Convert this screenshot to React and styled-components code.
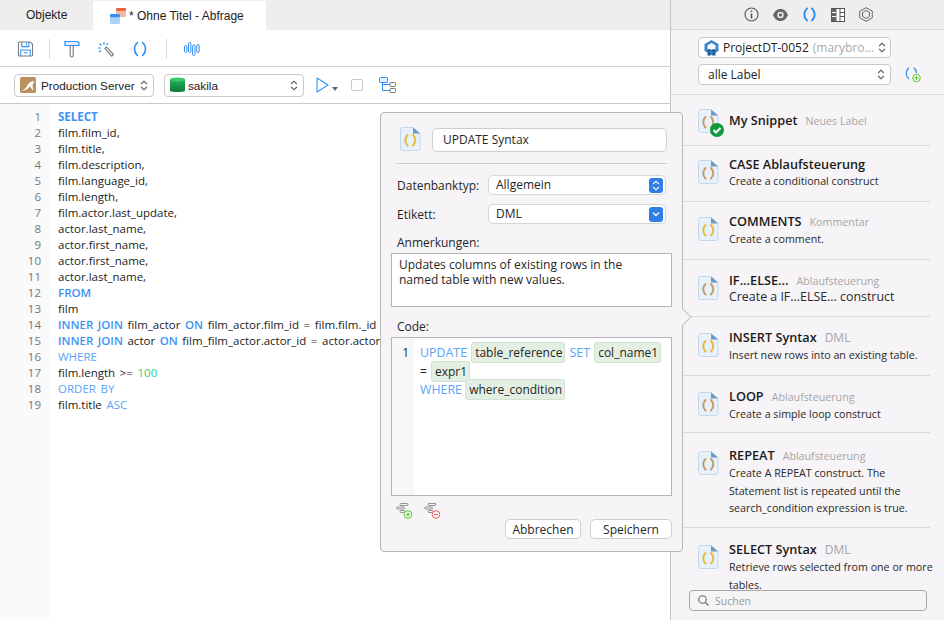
import React from 'react'
import styled, { createGlobalStyle } from 'styled-components'

const Global = createGlobalStyle`
  html, body { margin: 0; padding: 0; background: #fff; }
  body { font-family: 'Open Sans', 'Noto Sans', sans-serif; color: #1c1c1c; }
  * { box-sizing: border-box; }
`

const Page = styled.div`
  position: relative;
  width: 944px;
  height: 620px;
  display: flex;
  overflow: hidden;
`

const Main = styled.div`
  width: 670px;
  display: flex;
  flex-direction: column;
`

const TabBar = styled.div`
  height: 30px;
  background: #efeeee;
  display: flex;
  font: 12px 'Liberation Sans', Arial, sans-serif;
`

const Tab = styled.div`
  height: ${(p) => (p.$active ? '29px' : '30px')};
  margin-top: ${(p) => (p.$active ? '1px' : '0')};
  width: ${(p) => p.$w}px;
  background: ${(p) => (p.$active ? '#fff' : 'transparent')};
  padding-left: ${(p) => p.$pad}px;
  padding-top: ${(p) => (p.$active ? '1px' : '0')};
  display: flex;
  align-items: center;
  gap: 2px;
  color: #222;
`

const Toolbar = styled.div`
  height: 37px;
  border-bottom: 1px solid #d2d2d2;
  display: flex;
  align-items: center;
  padding-left: 17px;
  padding-top: 2px;
`

const ToolIcon = styled.div`
  width: ${(p) => p.$w}px;
  margin-left: ${(p) => p.$ml || 0}px;
  display: flex;
  justify-content: center;
`

const ToolSep = styled.div`
  width: 1px;
  height: 20px;
  background: #d8d8d8;
  margin: 0 ${(p) => p.$r}px 0 ${(p) => p.$l}px;
`

const ConnBar = styled.div`
  height: 37px;
  border-bottom: 1px solid #c8c8c8;
  display: flex;
  align-items: center;
  padding-left: 14px;
`

const ConnSelect = styled.div`
  width: 140px;
  height: 23px;
  margin-right: ${(p) => p.$mr}px;
  background: #fff;
  border: 1px solid #c9c9c9;
  border-radius: 4px;
  display: flex;
  align-items: center;
  gap: ${(p) => p.$gap}px;
  padding: 0 5px;
  font: 11.7px 'Liberation Sans', Arial, sans-serif;
  color: #222;
  white-space: nowrap;
  svg:last-child { margin-left: auto; flex: none; }
`

const Editor = styled.div`
  flex: 1;
  display: flex;
  overflow: hidden;
  font-size: 11.5px;
  line-height: 16px;
`

const Gutter = styled.div`
  width: 49px;
  background: #fafafa;
  padding: 5px 8px 0 0;
  text-align: right;
  color: #777;
`

const CodeArea = styled.div`
  flex: 1;
  padding: 5px 0 0 9px;
  white-space: nowrap;
  word-spacing: 1.6px;
`

const Kw = styled.span`
  color: ${(p) => (p.$light ? '#59a4f8' : '#3d92f5')};
  font-weight: ${(p) => p.$weight || 400};
  font-size: ${(p) => (p.$size ? `${p.$size}px` : 'inherit')};
`

const Num = styled.span`
  color: #2fcf7f;
`

const Side = styled.div`
  width: 274px;
  background: #f6f4f6;
  border-left: 1px solid #c4c4c4;
  display: flex;
  flex-direction: column;
  position: relative;
`

const SideTabs = styled.div`
  height: 30px;
  background: #efeeee;
  border-bottom: 1px solid #d8d8d8;
  display: flex;
  align-items: center;
  padding-left: 73px;
  gap: 14px;
`

const Filters = styled.div`
  height: 65px;
  border-bottom: 1px solid #d8d8d8;
  padding: 7px 0 0 27px;
  display: flex;
  flex-direction: column;
  gap: 6px;
`

const FilterRow = styled.div`
  display: flex;
  align-items: center;
  gap: 14px;
`

const FilterSelect = styled.div`
  width: 193px;
  height: 21px;
  background: #fff;
  border: 1px solid #c9c9c9;
  border-radius: 4px;
  display: flex;
  align-items: center;
  padding: 0 5px 0 ${(p) => p.$pad}px;
  gap: 4px;
  font-size: 12px;
  color: #222;
  white-space: nowrap;
  line-height: 19px;
  svg:last-child { margin-left: auto; flex: none; }
`

const Owner = styled.span`
  color: #aaa;
  font-size: 12px;
`

const List = styled.div`
  flex: 1;
  overflow: hidden;
  padding-left: 12px;
`

const Item = styled.div`
  height: ${(p) => p.$h}px;
  width: 247px;
  border-bottom: ${(p) => (p.$last ? 'none' : '1px solid #d9d9d9')};
  display: flex;
  padding: ${(p) => p.$top}px 0 0 15px;
  gap: 9px;
`

const ItemIcon = styled.div`
  margin-top: ${(p) => p.$offset}px;
  flex: none;
  height: 24px;
`

const ItemBody = styled.div`
  flex: 1;
  min-width: 0;
  margin-top: -1px;
  white-space: nowrap;
`

const TitleRow = styled.div`
  display: flex;
  align-items: baseline;
  gap: 8px;
  line-height: 18px;
`

const Title = styled.span`
  font-size: 12.7px;
  font-weight: 600;
  color: #1a1a1a;
`

const Tag = styled.span`
  font-size: ${(p) => p.$size || 10.7}px;
  color: #a6a6a6;
`

const Desc = styled.div`
  font-size: ${(p) => p.$size || 10.7}px;
  line-height: ${(p) => p.$lh || 17.5}px;
  color: #2a2a2a;
  white-space: normal;
  width: 206px;
`

const SearchBox = styled.div`
  position: absolute;
  left: 18px;
  bottom: 9px;
  width: 238px;
  height: 21px;
  background: #f6f4f6;
  border: 1px solid #a9a9a9;
  border-radius: 4px;
  display: flex;
  align-items: center;
  gap: 6px;
  padding-left: 8px;
  font-size: 10.5px;
  color: #999;
`

const SearchCover = styled.div`
  position: absolute;
  left: 0;
  right: 0;
  bottom: 0;
  height: 31px;
  background: linear-gradient(#f6f4f600, #f6f4f6 8px);
`

const Popover = styled.div`
  position: absolute;
  left: 380px;
  top: 112px;
  width: 303px;
  height: 440px;
  background: #f6f4f6;
  border: 1px solid #b8b8b8;
  border-radius: 4px;
  padding: 13px 10px 0 10px;
  display: flex;
  flex-direction: column;
  font-size: 12px;
  color: #262626;
`

const Arrow = styled.div`
  position: absolute;
  right: -8px;
  top: 197px;
  width: 14px;
  height: 14px;
  background: #f6f4f6;
  border-top: 1px solid #b8b8b8;
  border-right: 1px solid #b8b8b8;
  transform: rotate(45deg) scale(0.85);
`

const NameRow = styled.div`
  display: flex;
  align-items: center;
  gap: 10px;
  padding: 0 5px 10px 9px;
  height: 37px;
`

const NameInput = styled.div`
  flex: 1;
  height: 24px;
  background: #fff;
  border: 1px solid #cfcfcf;
  border-radius: 5px;
  display: flex;
  align-items: center;
  padding-left: 10px;
  font-size: 12px;
`

const Divider = styled.div`
  height: 1px;
  background: #d0d0d0;
  margin: 0 5px 11px 5px;
`

const FormRow = styled.div`
  display: flex;
  align-items: center;
  height: 20px;
  margin: 0 6px 9px 6px;
`

const FormLabel = styled.div`
  width: 91px;
`

const BlueSelect = styled.div`
  flex: 1;
  height: 20px;
  background: #fff;
  border: 1px solid #d6d6d6;
  border-radius: 5px;
  display: flex;
  align-items: center;
  justify-content: space-between;
  padding: 0 2px 2px 7px;
`

const BlueKnob = styled.div`
  width: 14px;
  height: 15px;
  margin-bottom: -2px;
  background: #2f7fe6;
  border-radius: 3px;
  display: flex;
  align-items: center;
  justify-content: center;
`

const SectionLabel = styled.div`
  line-height: 16px;
  margin: ${(p) => p.$mt || 0}px 0 2px 6px;
`

const Notes = styled.div`
  height: 54px;
  background: #fff;
  border: 1px solid #b5b5b5;
  padding: 3px 40px 0 7px;
  line-height: 15px;
  font-size: 12px;
`

const CodeBox = styled.div`
  height: 159px;
  background: #fff;
  border: 1px solid #b5b5b5;
  display: flex;
  font-size: 12px;
`

const CodeGutter = styled.div`
  width: 22px;
  background: #f7f7f7;
  padding: 6px 5px 0 0;
  text-align: right;
  line-height: 18px;
`

const SnippetCode = styled.div`
  flex: 1;
  padding: 6px 0 0 6px;
  line-height: 18.5px;
`

const Chip = styled.span`
  background: #e2efe2;
  border: 1px solid #d2e3d2;
  border-radius: 3px;
  padding: 1px 2px 1px 3px;
  margin: 0 ${(p) => (p.$tight ? 0 : 1)}px;
`

const PopFoot = styled.div`
  display: flex;
  gap: 11px;
  padding: 7px 0 0 5px;
`

const Buttons = styled.div`
  display: flex;
  justify-content: flex-end;
  gap: 9px;
`

const Btn = styled.div`
  width: ${(p) => p.$w}px;
  height: 20px;
  background: #fff;
  border: 1px solid #cfcfcf;
  border-radius: 5px;
  display: flex;
  align-items: center;
  justify-content: center;
  font-size: 12px;
`

const Caret = styled.div`
  width: 0;
  height: 0;
  border-left: 3px solid transparent;
  border-right: 3px solid transparent;
  border-top: 4px solid #666;
  margin: 8px 13px 0 3px;
`

const PlayWrap = styled.div`
  display: flex;
  align-items: center;
  margin-left: 12px;
`

const CheckBox = styled.div`
  width: 12px;
  height: 12px;
  border: 1px solid #c8c8c8;
  border-radius: 2px;
  margin-right: 16px;
`

const Chevrons = ({ color = '#555', size = 11 }) => (
  <svg width="8" height={size} viewBox="0 0 8 11" fill="none" stroke={color} strokeWidth="1.1">
    <path d="M1.2 4 4 1.2 6.8 4M1.2 7 4 9.8 6.8 7" />
  </svg>
)

const Parens = ({ color = '#2f8ff5', size = 16, width = 1.6 }) => (
  <svg width={size} height={size} viewBox="0 0 16 16" fill="none" stroke={color} strokeWidth={width} strokeLinecap="round">
    <path d="M5.5 1.5C1.5 5 1.5 11 5.5 14.5M10.5 1.5C14.5 5 14.5 11 10.5 14.5" />
  </svg>
)

const FileIcon = ({ color, check }) => (
  <svg width="22" height="26" viewBox="0 0 22 26" style={{ flex: 'none', overflow: 'visible' }}>
    <path d="M2.5.5H13L20 6.5V21.5a2 2 0 0 1-2 2H2.5a2 2 0 0 1-2-2V2.5a2 2 0 0 1 2-2z" fill="#e6f1fb" stroke="#c4d8ea" />
    <path d="M13 .5 20 6.5H13z" fill="#6a9ac4" />
    <path d="M7.5 8C4.5 11 4.5 15.5 7.5 18.5M13 8C16 11 16 15.5 13 18.5" fill="none" stroke={color} strokeWidth="2" strokeLinecap="round" />
    {check && <circle cx="19" cy="21" r="7" fill="#0f9a3c" />}
    {check && <path d="M15.5 21l2.5 2.5 4.5-4.5" fill="none" stroke="#fff" strokeWidth="2" />}
  </svg>
)

const SaveIcon = () => (
  <svg width="18" height="18" viewBox="0 0 18 18" fill="none" strokeWidth="1.1">
    <path d="M2.5 1.5H14L16.5 4V15a1.5 1.5 0 0 1-1.5 1.5H3A1.5 1.5 0 0 1 1.5 15V2.5z" stroke="#777" />
    <path d="M5 1.5V6.5H12.5V1.5M10 3V5" stroke="#2f8ff5" />
    <path d="M4 16.5V10H14V16.5M7 13H11" stroke="#2f8ff5" />
  </svg>
)

const HammerIcon = () => (
  <svg width="16" height="18" viewBox="0 0 16 18" fill="none">
    <path d="M1 1.5H13.5L15 3V5.5H1z" stroke="#2f8ff5" strokeWidth="1.2" fill="#e3f0fd" />
    <path d="M6.2 5.5V15.5a1.5 1.5 0 0 0 3 0V5.5" stroke="#777" strokeWidth="1.1" />
  </svg>
)

const WandIcon = () => (
  <svg width="17" height="17" viewBox="0 0 17 17" fill="none" strokeWidth="1.1">
    <path d="M8 7.5 9.5 6l7 7.5-1.7 1.7z" stroke="#777" />
    <path d="M7 1v3M1 7h3M2.5 2.5 4.5 4.5M11 2 9.5 4M2 11l2-1.5" stroke="#2f8ff5" />
  </svg>
)

const BarsIcon = () => (
  <svg width="16" height="14" viewBox="0 0 16 14" fill="none" stroke="#2f8ff5" strokeWidth="1">
    <rect x=".5" y="3.5" width="2.4" height="7" rx="1.2" />
    <rect x="4.5" y=".5" width="2.4" height="10" rx="1.2" />
    <rect x="8.6" y="3" width="2.4" height="10.5" rx="1.2" />
    <rect x="12.8" y="2.5" width="2.4" height="8" rx="1.2" />
  </svg>
)

const TableTabIcon = () => (
  <svg width="17" height="16" viewBox="0 0 17 16">
    <rect x="6" y="0" width="10" height="9" rx="1.5" fill="#f4b8a8" />
    <rect x="6" y="0" width="10" height="3" rx="1.2" fill="#e8623c" />
    <rect x="0" y="6" width="10" height="10" rx="1.5" fill="#a8d3f7" />
    <rect x="0" y="6" width="10" height="3.2" rx="1.2" fill="#2f8ff5" />
  </svg>
)

const SealIcon = () => (
  <svg width="16" height="16" viewBox="0 0 16 16" style={{ flex: 'none' }}>
    <rect width="16" height="16" rx="1.5" fill="#b9925f" />
    <path d="M1 13.5c3-.3 4.5-2 6-4.5 1.2-2 2.7-4.5 6-4.8l2 1-2 .8c-.6 2.5-.5 5 .8 7.5-2-1.4-3.4-3-4-4.5C9 11.500 6 13.500 1 13.500z" fill="#fff" />
  </svg>
)

const DbIcon = () => (
  <svg width="15" height="16" viewBox="0 0 15 16" style={{ flex: 'none' }}>
    <defs>
      <linearGradient id="dbg" x1="0" x2="0" y1="0" y2="1">
        <stop offset="0" stopColor="#2db35a" />
        <stop offset="1" stopColor="#0b7a38" />
      </linearGradient>
    </defs>
    <path d="M0 2.500C0 .8 15 .8 15 2.500V13.500C15 15.500 0 15.500 0 13.500z" fill="url(#dbg)" />
    <ellipse cx="7.500" cy="2.500" rx="7.500" ry="2" fill="#36c96a" />
  </svg>
)

const PlayIcon = () => (
  <svg width="13" height="16" viewBox="0 0 13 16" fill="none" stroke="#2f8ff5" strokeWidth="1.1">
    <path d="M1 1v14l11-7z" strokeLinejoin="round" />
  </svg>
)

const TreeIcon = () => (
  <svg width="17" height="16" viewBox="0 0 17 16" fill="none" strokeWidth="1">
    <rect x=".5" y=".5" width="8" height="5" rx=".8" stroke="#2f8ff5" fill="#e3f0fd" />
    <rect x="11" y="5.500" width="5.500" height="4" rx=".8" stroke="#777" />
    <rect x="11" y="11.500" width="5.500" height="4" rx=".8" stroke="#777" />
    <path d="M3.500 5.500V13.500H11M3.500 7.500H11" stroke="#2f8ff5" />
  </svg>
)

const InfoIcon = () => (
  <svg width="15" height="15" viewBox="0 0 15 15" fill="none" stroke="#555" strokeWidth="1.1">
    <circle cx="7.500" cy="7.500" r="6.500" />
    <path d="M7.500 6.500V11.500" strokeWidth="1.500" />
    <path d="M7.500 3.500v1.500" strokeWidth="1.500" />
  </svg>
)

const EyeIcon = () => (
  <svg width="15" height="12" viewBox="0 0 15 12">
    <path d="M0 6C2 1.500 4.500 0 7.500 0S13 1.500 15 6c-2 4.500-4.500 6-7.500 6S2 10.500 0 6z" fill="#666" />
    <circle cx="7.500" cy="6" r="3.200" fill="#efeeee" />
    <circle cx="7.500" cy="6" r="1.700" fill="#666" />
  </svg>
)

const ColumnsIcon = () => (
  <svg width="14" height="14" viewBox="0 0 14 14" fill="none">
    <rect x=".5" y=".5" width="13" height="13" fill="#fff" stroke="#555" />
    <path d="M.5 1h5v12h-5z" fill="#666" />
    <path d="M1 4.500h4M1 8.500h4" stroke="#fff" />
    <path d="M9 1v12M9 4.500h4.500M9 8.500h4.500" stroke="#555" />
  </svg>
)

const HexIcon = () => (
  <svg width="14" height="15" viewBox="0 0 14 15" fill="none" stroke="#666" strokeWidth="1">
    <path d="M7 .7 13.300 4.200v6.600L7 14.300.7 10.800V4.200z" />
    <path d="M7 3.500 10.500 5.500v4L7 11.500 3.500 9.500v-4z" />
  </svg>
)

const ProjectIcon = () => (
  <svg width="15" height="16" viewBox="0 0 15 16" style={{ flex: 'none' }}>
    <path d="M7.500 0 14.500 4V11L7.500 15 .5 11V4z" fill="#3a87c8" />
    <path d="M7.500 3 11.500 5.300V9.500H3.500V5.300z" fill="#f6f9fc" />
    <circle cx="5.200" cy="10.500" r="1.500" fill="#1c5f97" />
    <circle cx="9.800" cy="10.500" r="1.500" fill="#1c5f97" />
    <path d="M3.500 15.500V13c0-1 3.400-1 3.400 0v2.500zM8.100 15.500V13c0-1 3.400-1 3.400 0v2.500z" fill="#1c5f97" />
  </svg>
)

const AddSnippetIcon = () => (
  <svg width="16" height="16" viewBox="0 0 16 16" fill="none" style={{ overflow: 'visible' }}>
    <path d="M3.500 1C.5 4 .5 8.500 3.500 11.500M9 1C10.500 2.300 11.300 4 11.500 5.500" stroke="#2f8ff5" strokeWidth="1.300" strokeLinecap="round" />
    <circle cx="11.500" cy="11" r="3.800" fill="#f6f4f6" stroke="#5fc92e" strokeWidth="1" />
    <path d="M9.500 11h4M11.500 9v4" stroke="#5fc92e" strokeWidth="1" />
  </svg>
)

const GroupIcon = ({ color, minus }) => (
  <svg width="17" height="16" viewBox="0 0 17 16" fill="none">
    <rect x="4" y=".5" width="8" height="2" rx="1" stroke="#777" strokeWidth=".8" />
    <rect x=".5" y="4" width="8" height="2" rx="1" stroke="#777" strokeWidth=".8" />
    <rect x="4" y="7.500" width="5" height="2" rx="1" stroke="#777" strokeWidth=".8" />
    <circle cx="12" cy="11.500" r="3.800" fill="#f6f4f6" stroke={color} strokeWidth="1" />
    <path d="M10 11.500h4" stroke={color} strokeWidth="1" />
    {!minus && <path d="M12 9.500v4" stroke={color} strokeWidth="1" />}
  </svg>
)

const SearchIcon = () => (
  <svg width="11" height="11" viewBox="0 0 11 11" fill="none" stroke="#666" strokeWidth="1.100">
    <circle cx="4.500" cy="4.500" r="3.800" />
    <path d="M7.300 7.300 10.500 10.500" />
  </svg>
)

const lines = [
  <Kw $weight={700}>SELECT</Kw>,
  'film.film_id,',
  'film.title,',
  'film.description,',
  'film.language_id,',
  'film.length,',
  'film.actor.last_update,',
  'actor.last_name,',
  'actor.first_name,',
  'actor.first_name,',
  'actor.last_name,',
  <Kw $weight={600}>FROM</Kw>,
  'film',
  <><Kw $weight={600}>INNER JOIN</Kw> film_actor <Kw $weight={600}>ON</Kw> film_actor.film_id = film.film._id</>,
  <><Kw $weight={600}>INNER JOIN</Kw> actor <Kw $weight={600}>ON</Kw> film_film_actor.actor_id = actor.actor_id</>,
  <Kw $light>WHERE</Kw>,
  <>film.length &gt;= <Num>100</Num></>,
  <Kw $light>ORDER BY</Kw>,
  <>film.title <Kw $light>ASC</Kw></>,
]

const TAN = '#c99a66'
const GOLD = '#e8b93c'

const snippets = [
  { title: 'My Snippet', tag: 'Neues Label', color: TAN, check: true, h: 51, top: 17, icon: -3 },
  { title: 'CASE Ablaufsteuerung', desc: 'Create a conditional construct', color: TAN, h: 56, top: 10, icon: 4 },
  { title: 'COMMENTS', tag: 'Kommentar', desc: 'Create a comment.', color: GOLD, h: 58, top: 11, icon: 4 },
  { title: 'IF...ELSE...', tag: 'Ablaufsteuerung', desc: 'Create a IF...ELSE... construct', descSize: 12.4, descLh: 14, color: TAN, h: 57, top: 12, icon: 4 },
  { title: 'INSERT Syntax', tag: 'DML', tagSize: 12, desc: 'Insert new rows into an existing table.', color: GOLD, h: 59, top: 12, icon: 4 },
  { title: 'LOOP', tag: 'Ablaufsteuerung', desc: 'Create a simple loop construct', color: TAN, h: 57, top: 12, icon: 4 },
  { title: 'REPEAT', tag: 'Ablaufsteuerung', desc: 'Create A REPEAT construct. The Statement list is repeated until the search_condition expression is true.', color: TAN, h: 95, top: 14, icon: 4 },
  { title: 'SELECT Syntax', tag: 'DML', tagSize: 12, desc: 'Retrieve rows selected from one or more tables.', color: GOLD, h: 70, top: 13, icon: 4, last: true },
]

export default function App() {
  return (
    <Page>
      <Global />
      <Main>
        <TabBar>
          <Tab $w={93} $pad={26}>Objekte</Tab>
          <Tab $active $w={173} $pad={17}><TableTabIcon />* Ohne Titel - Abfrage</Tab>
        </TabBar>
        <Toolbar>
          <ToolIcon $w={17}><SaveIcon /></ToolIcon>
          <ToolSep $l={15} $r={14} />
          <ToolIcon $w={16}><HammerIcon /></ToolIcon>
          <ToolIcon $w={17} $ml={17}><WandIcon /></ToolIcon>
          <ToolIcon $w={16} $ml={18}><Parens /></ToolIcon>
          <ToolSep $l={18} $r={17} />
          <ToolIcon $w={16}><BarsIcon /></ToolIcon>
        </Toolbar>
        <ConnBar>
          <ConnSelect $mr={10} $gap={5}><SealIcon />Production Server<Chevrons /></ConnSelect>
          <ConnSelect $mr={0} $gap={3}><DbIcon />sakila<Chevrons /></ConnSelect>
          <PlayWrap><PlayIcon /><Caret /></PlayWrap>
          <CheckBox />
          <TreeIcon />
        </ConnBar>
        <Editor>
          <Gutter>{lines.map((_, i) => <div key={i}>{i + 1}</div>)}</Gutter>
          <CodeArea>{lines.map((l, i) => <div key={i}>{l}</div>)}</CodeArea>
        </Editor>
      </Main>
      <Side>
        <SideTabs>
          <InfoIcon />
          <EyeIcon />
          <Parens size={15} width={2} />
          <ColumnsIcon />
          <HexIcon />
        </SideTabs>
        <Filters>
          <FilterRow>
            <FilterSelect $pad={5}><ProjectIcon />ProjectDT-0052 <Owner>(marybro...</Owner><Chevrons /></FilterSelect>
          </FilterRow>
          <FilterRow>
            <FilterSelect $pad={9}>alle Label<Chevrons /></FilterSelect>
            <AddSnippetIcon />
          </FilterRow>
        </Filters>
        <List>
          {snippets.map((s) => (
            <Item key={s.title} $h={s.h} $top={s.top} $last={s.last}>
              <ItemIcon $offset={s.icon}><FileIcon color={s.color} check={s.check} /></ItemIcon>
              <ItemBody>
                <TitleRow>
                  <Title>{s.title}</Title>
                  {s.tag && <Tag $size={s.tagSize}>{s.tag}</Tag>}
                </TitleRow>
                {s.desc && <Desc $size={s.descSize} $lh={s.descLh}>{s.desc}</Desc>}
              </ItemBody>
            </Item>
          ))}
        </List>
        <SearchCover />
        <SearchBox><SearchIcon />Suchen</SearchBox>
      </Side>
      <Popover>
        <Arrow />
        <NameRow>
          <FileIcon color={GOLD} />
          <NameInput>UPDATE Syntax</NameInput>
        </NameRow>
        <Divider />
        <FormRow>
          <FormLabel>Datenbanktyp:</FormLabel>
          <BlueSelect>Allgemein<BlueKnob><Chevrons color="#fff" /></BlueKnob></BlueSelect>
        </FormRow>
        <FormRow>
          <FormLabel>Etikett:</FormLabel>
          <BlueSelect>DML
            <BlueKnob>
              <svg width="8" height="6" viewBox="0 0 8 6" fill="none" stroke="#fff" strokeWidth="1.300"><path d="M1 1.500 4 4.500 7 1.500" /></svg>
            </BlueKnob>
          </BlueSelect>
        </FormRow>
        <SectionLabel $mt={2}>Anmerkungen:</SectionLabel>
        <Notes>Updates columns of existing rows in the named table with new values.</Notes>
        <SectionLabel $mt={12}>Code:</SectionLabel>
        <CodeBox>
          <CodeGutter>1</CodeGutter>
          <SnippetCode>
            <Kw $light $weight={500} $size={12.4}>UPDATE</Kw> <Chip>table_reference</Chip> <Kw $light $weight={500} $size={12.4}>SET</Kw> <Chip>col_name1</Chip><br />
            = <Chip>expr1</Chip><br />
            <Kw $light $weight={500} $size={12.4}>WHERE</Kw> <Chip $tight>where_condition</Chip>
          </SnippetCode>
        </CodeBox>
        <PopFoot>
          <GroupIcon color="#5fc92e" />
          <GroupIcon color="#f0645a" minus />
        </PopFoot>
        <Buttons>
          <Btn $w={76}>Abbrechen</Btn>
          <Btn $w={82}>Speichern</Btn>
        </Buttons>
      </Popover>
    </Page>
  )
}
